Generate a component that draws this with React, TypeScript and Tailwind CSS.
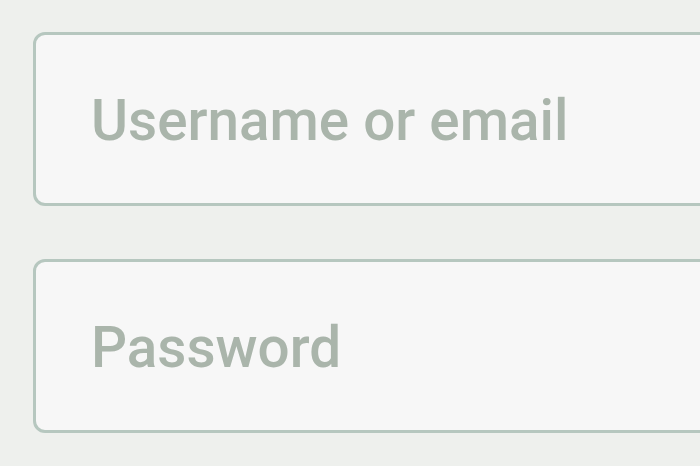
import React from "react";

export default function App() {
  return (
    <div className="h-[466px] w-[700px] overflow-hidden bg-[#eef0ed] pt-[32px] pl-[33px]" style={{ fontFamily: "Roboto, 'Noto Sans', sans-serif" }}>
      <form className="flex w-[720px] flex-col gap-[53px]">
        <input
          type="text"
          placeholder="Username or email"
          className="h-[174px] w-full rounded-[12px] border-[3px] border-[#b6c7bf] bg-[#f7f7f7] pl-[55px] pt-[2px] text-[56.6px] font-medium text-[#7d8a80] outline-none placeholder:text-[#aab5ab]"
        />
        <input
          type="password"
          placeholder="Password"
          className="h-[174px] w-full rounded-[12px] border-[3px] border-[#b6c7bf] bg-[#f7f7f7] pl-[55px] pt-[2px] text-[56.6px] font-medium text-[#7d8a80] outline-none placeholder:text-[#aab5ab]"
        />
      </form>
    </div>
  );
}
